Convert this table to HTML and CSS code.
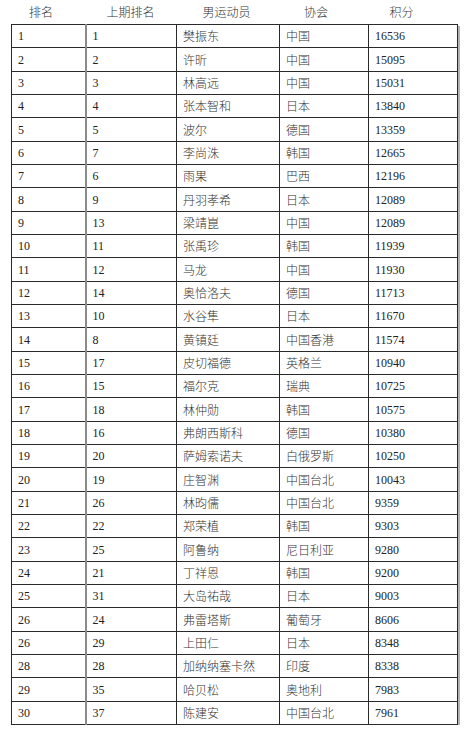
FILE: index.html
```html
<!DOCTYPE html>
<html lang="zh">
<head>
<meta charset="utf-8">
<title>男运动员积分排名</title>
<link rel="stylesheet" href="styles.css">
</head>
<body>
<div class="wrap">
  <div class="head">
    <div class="h h1">排名</div>
    <div class="h h2">上期排名</div>
    <div class="h h3">男运动员</div>
    <div class="h h4">协会</div>
    <div class="h h5">积分</div>
  </div>
  <table class="rank">
    <colgroup><col class="c1"><col class="c2"><col class="c3"><col class="c4"><col class="c5"></colgroup>
    <tbody>
      <tr><td>1</td><td>1</td><td class="zh">樊振东</td><td class="zh">中国</td><td>16536</td></tr>
      <tr><td>2</td><td>2</td><td class="zh">许昕</td><td class="zh">中国</td><td>15095</td></tr>
      <tr><td>3</td><td>3</td><td class="zh">林高远</td><td class="zh">中国</td><td>15031</td></tr>
      <tr><td>4</td><td>4</td><td class="zh">张本智和</td><td class="zh">日本</td><td>13840</td></tr>
      <tr><td>5</td><td>5</td><td class="zh">波尔</td><td class="zh">德国</td><td>13359</td></tr>
      <tr><td>6</td><td>7</td><td class="zh">李尚洙</td><td class="zh">韩国</td><td>12665</td></tr>
      <tr><td>7</td><td>6</td><td class="zh">雨果</td><td class="zh">巴西</td><td>12196</td></tr>
      <tr><td>8</td><td>9</td><td class="zh">丹羽孝希</td><td class="zh">日本</td><td>12089</td></tr>
      <tr><td>9</td><td>13</td><td class="zh">梁靖崑</td><td class="zh">中国</td><td>12089</td></tr>
      <tr><td>10</td><td>11</td><td class="zh">张禹珍</td><td class="zh">韩国</td><td>11939</td></tr>
      <tr><td>11</td><td>12</td><td class="zh">马龙</td><td class="zh">中国</td><td>11930</td></tr>
      <tr><td>12</td><td>14</td><td class="zh">奥恰洛夫</td><td class="zh">德国</td><td>11713</td></tr>
      <tr><td>13</td><td>10</td><td class="zh">水谷隼</td><td class="zh">日本</td><td>11670</td></tr>
      <tr><td>14</td><td>8</td><td class="zh">黄镇廷</td><td class="zh">中国香港</td><td>11574</td></tr>
      <tr><td>15</td><td>17</td><td class="zh">皮切福德</td><td class="zh">英格兰</td><td>10940</td></tr>
      <tr><td>16</td><td>15</td><td class="zh">福尔克</td><td class="zh">瑞典</td><td>10725</td></tr>
      <tr><td>17</td><td>18</td><td class="zh">林仲勋</td><td class="zh">韩国</td><td>10575</td></tr>
      <tr><td>18</td><td>16</td><td class="zh">弗朗西斯科</td><td class="zh">德国</td><td>10380</td></tr>
      <tr><td>19</td><td>20</td><td class="zh">萨姆索诺夫</td><td class="zh">白俄罗斯</td><td>10250</td></tr>
      <tr><td>20</td><td>19</td><td class="zh">庄智渊</td><td class="zh">中国台北</td><td>10043</td></tr>
      <tr><td>21</td><td>26</td><td class="zh">林昀儒</td><td class="zh">中国台北</td><td>9359</td></tr>
      <tr><td>22</td><td>22</td><td class="zh">郑荣植</td><td class="zh">韩国</td><td>9303</td></tr>
      <tr><td>23</td><td>25</td><td class="zh">阿鲁纳</td><td class="zh">尼日利亚</td><td>9280</td></tr>
      <tr><td>24</td><td>21</td><td class="zh">丁祥恩</td><td class="zh">韩国</td><td>9200</td></tr>
      <tr><td>25</td><td>31</td><td class="zh">大岛祐哉</td><td class="zh">日本</td><td>9003</td></tr>
      <tr><td>26</td><td>24</td><td class="zh">弗雷塔斯</td><td class="zh">葡萄牙</td><td>8606</td></tr>
      <tr><td>26</td><td>29</td><td class="zh">上田仁</td><td class="zh">日本</td><td>8348</td></tr>
      <tr><td>28</td><td>28</td><td class="zh">加纳纳塞卡然</td><td class="zh">印度</td><td>8338</td></tr>
      <tr><td>29</td><td>35</td><td class="zh">哈贝松</td><td class="zh">奥地利</td><td>7983</td></tr>
      <tr><td>30</td><td>37</td><td class="zh">陈建安</td><td class="zh">中国台北</td><td>7961</td></tr>
    </tbody>
  </table>
</div>
</body>
</html>
```
FILE: styles.css
```css
html, body {
  margin: 0;
  padding: 0;
  background: #fff;
}
.wrap {
  padding-left: 11px;
  color: #333;
  font-family: "Noto Sans CJK SC", sans-serif;
}
.head {
  display: grid;
  grid-template-columns: 74px 91px 103px 89px 89px;
  height: 24px;
  align-items: center;
  font-size: 12px;
  font-weight: 300;
  line-height: 24px;
}
.h {
  text-align: center;
  white-space: nowrap;
}
.h1 { padding-right: 14px; }
.h3 { padding-right: 2px; }
.h4 { padding-right: 15px; }
.h5 { padding-right: 22px; }
.rank {
  border-collapse: collapse;
  table-layout: fixed;
  width: 446px;
  box-shadow: 2px 2px 0 #b4b4b4;
  font-family: "Liberation Serif", "Noto Sans CJK SC", serif;
  font-size: 12px;
  color: #222;
}
.c1 { width: 74px; }
.c2 { width: 91px; }
.c3 { width: 103px; }
.c4 { width: 89px; }
.c5 { width: 89px; }
.rank td {
  border: 1px solid #2a2a2a;
  padding: 0 0 0 6px;
  height: 22px;
  line-height: 16px;
  vertical-align: middle;
  white-space: nowrap;
  overflow: hidden;
}
.rank tr:nth-child(3n+2) td {
  height: 23px;
}
.rank td:first-child {
  border-right: 2px solid #8a8a8a;
}
.rank td.zh {
  font-family: "Noto Sans CJK SC", sans-serif;
  font-size: 12px;
  font-weight: 300;
  color: #333;
}
```
